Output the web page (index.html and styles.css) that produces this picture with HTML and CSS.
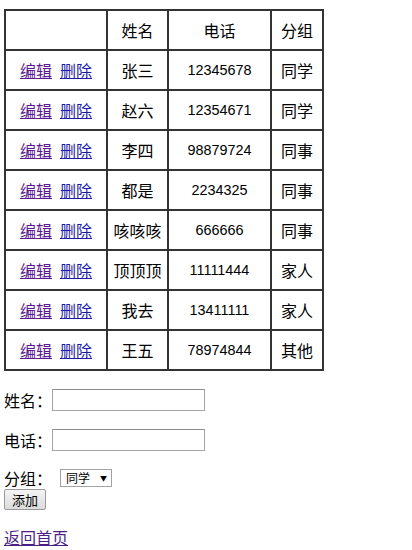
FILE: index.html
```html
<!DOCTYPE html>
<html lang="zh">
<head>
<meta charset="utf-8">
<title>通讯录</title>
<link rel="stylesheet" href="styles.css">
</head>
<body>
<table class="contacts">
  <colgroup>
    <col class="c-act"><col class="c-name"><col class="c-tel"><col class="c-grp">
  </colgroup>
  <tr><td></td><td>姓名</td><td>电话</td><td>分组</td></tr>
  <tr><td><span class="acts"><a class="edit" href="#">编辑</a><a class="del" href="#">删除</a></span></td><td>张三</td><td class="num">12345678</td><td>同学</td></tr>
  <tr><td><span class="acts"><a class="edit" href="#">编辑</a><a class="del" href="#">删除</a></span></td><td>赵六</td><td class="num">12354671</td><td>同学</td></tr>
  <tr><td><span class="acts"><a class="edit" href="#">编辑</a><a class="del" href="#">删除</a></span></td><td>李四</td><td class="num">98879724</td><td>同事</td></tr>
  <tr><td><span class="acts"><a class="edit" href="#">编辑</a><a class="del" href="#">删除</a></span></td><td>都是</td><td class="num">2234325</td><td>同事</td></tr>
  <tr><td><span class="acts"><a class="edit" href="#">编辑</a><a class="del" href="#">删除</a></span></td><td>咳咳咳</td><td class="num">666666</td><td>同事</td></tr>
  <tr><td><span class="acts"><a class="edit" href="#">编辑</a><a class="del" href="#">删除</a></span></td><td>顶顶顶</td><td class="num">11111444</td><td>家人</td></tr>
  <tr><td><span class="acts"><a class="edit" href="#">编辑</a><a class="del" href="#">删除</a></span></td><td>我去</td><td class="num">13411111</td><td>家人</td></tr>
  <tr><td><span class="acts"><a class="edit" href="#">编辑</a><a class="del" href="#">删除</a></span></td><td>王五</td><td class="num">78974844</td><td>其他</td></tr>
</table>
<form class="add-form">
  <div class="field"><label>姓名：</label><input type="text" class="text-input"></div>
  <div class="field"><label>电话：</label><input type="text" class="text-input"></div>
  <div class="field group-field"><label>分组：</label>
    <span class="select-wrap">
      <select class="group-select"><option>同学</option><option>同事</option><option>家人</option><option>其他</option></select>
      <span class="arrow">▼</span>
    </span>
  </div>
  <button type="button" class="add-btn">添加</button>
</form>
<a class="back" href="#">返回首页</a>
</body>
</html>
```

FILE: styles.css
```css
html, body {
  margin: 0;
  padding: 0;
  background: #ffffff;
}
body {
  padding: 9px 4px 0 4px;
  font-family: "Noto Sans CJK SC", "Liberation Sans", sans-serif;
  font-size: 16px;
  color: #000;
}
.contacts {
  border-collapse: collapse;
  table-layout: fixed;
  width: 320px;
  border: 2px solid #333;
}
.c-act { width: 102px; }
.c-name { width: 61px; }
.c-tel { width: 103px; }
.c-grp { width: 52px; }
.contacts td {
  border: 2px solid #333;
  height: 38px;
  padding: 0;
  text-align: center;
  vertical-align: middle;
  line-height: 20px;
  white-space: nowrap;
}
.contacts td.num {
  font-family: "Liberation Sans", sans-serif;
  font-size: 14.4px;
}
.acts {
  display: inline-flex;
  gap: 8px;
}
a {
  text-decoration: underline;
}
.edit {
  color: #5b1a8e;
}
.del {
  color: #1c1ca8;
}
.add-form {
  margin-top: 9px;
}
.field {
  display: flex;
  align-items: center;
  height: 40px;
}
.field label {
  line-height: 20px;
}
.text-input {
  box-sizing: border-box;
  width: 153px;
  height: 22px;
  margin: 0;
  padding: 1px 2px;
  border: 1px solid #a5a5a5;
  border-top-color: #8e8e8e;
  background: #fff;
  font-size: 13px;
}
.group-field {
  height: 20px;
  margin-top: 8px;
}
.select-wrap {
  position: relative;
  display: inline-flex;
  margin-left: 8px;
  height: 18px;
}
.group-select {
  -webkit-appearance: none;
  appearance: none;
  box-sizing: border-box;
  width: 52px;
  height: 18px;
  margin: 0;
  padding: 0 0 0 5px;
  border: 1px solid #a3a3a3;
  border-radius: 0;
  background: #fff;
  font-family: "Noto Sans CJK SC", sans-serif;
  font-size: 12px;
  line-height: 16px;
  color: #000;
}
.arrow {
  position: absolute;
  right: 5px;
  top: 4px;
  font-size: 7px;
  line-height: 10px;
  color: #000;
  pointer-events: none;
}
.add-btn {
  display: block;
  box-sizing: border-box;
  width: 42px;
  height: 21px;
  margin: 1px 0 0 0;
  padding: 0;
  border: 1px solid #9a9a9a;
  border-radius: 2px;
  background: linear-gradient(#f4f4f4, #dcdcdc);
  font-family: "Noto Sans CJK SC", sans-serif;
  font-size: 13px;
  line-height: 18px;
  color: #000;
}
.back {
  display: inline-block;
  margin-top: 17px;
  line-height: 20px;
  color: #4b1f86;
}
```
